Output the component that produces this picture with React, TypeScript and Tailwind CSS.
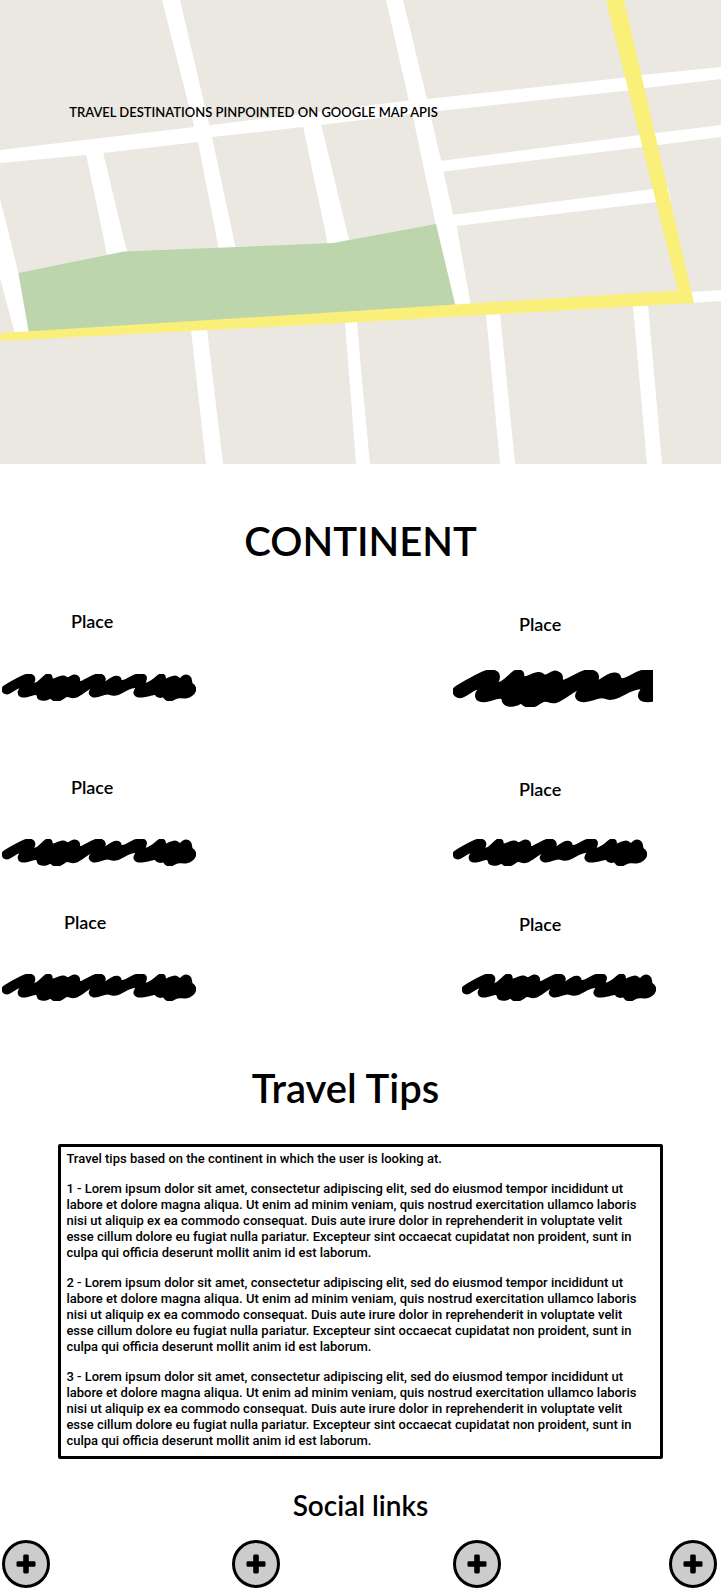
const LOREM =
  "Lorem ipsum dolor sit amet, consectetur adipiscing elit, sed do eiusmod tempor incididunt ut labore et dolore magna aliqua. Ut enim ad minim veniam, quis nostrud exercitation ullamco laboris nisi ut aliquip ex ea commodo consequat. Duis aute irure dolor in reprehenderit in voluptate velit esse cillum dolore eu fugiat nulla pariatur. Excepteur sint occaecat cupidatat non proident, sunt in culpa qui officia deserunt mollit anim id est laborum.";

function StreetMap() {
  return (
    <svg viewBox="0 0 721 464" className="block h-auto w-full" role="img" aria-label="Street map">
      <rect width="721" height="464" fill="#ebe8e1" />
      <g fill="#fff">
        <polygon points="162,0 180,0 209,124 212,137 236,250 219,250 198,142 194,126" />
        <polygon points="0,150 194,127 409,100.6 427,99 625,77.5 642,75 721,67 721,79 645,88 628,90.5 430,112 361,120 321,125 303,127 212,137 198,142 103,153 86,155 0,163" />
        <polygon points="86,154 103,152 124,240 128,254 107,256 104,240" />
        <polygon points="303,126 321,124 350,244 328,248 327,240" />
        <polygon points="386,0 403,0 427,99 431,117 441,160 453,215 457,226 459,240 471,306 455,306 439,240 413,117 409,101" />
        <polygon points="440,161 640,135 656,133 721,125 721,137 658,145 642,147 440,172" />
        <polygon points="452,215 653,189 668,187 671,201 657,202 456,226" />
        <polygon points="690,292 721,290 721,301 690,303" />
        <polygon points="0,199 8,230 18,272 29,333 15,334 0,278" />
        <polygon points="191,330 207,329 223,464 206,464" />
        <polygon points="345,322 357,321 361,370 370,464 356,464" />
        <polygon points="486,314 500,313 515,464 500,464" />
        <polygon points="633,306 648,305 662,464 647,464" />
      </g>
      <polygon fill="#bcd5ac" points="18.500,273 124,251.500 333,243 436,224 455.500,306 29,333" />
      <polygon fill="#faef78" points="606,0 624,0 694,303 361,322 0,341 1,333 361,310.500 678,290.500" />
    </svg>
  );
}

const OUTLINE: [number, number][] = [
  [0, 44], [4, 37], [64, 3], [82, -1], [96, 5], [98, 19], [91, 31], [106, 26], [128, 4], [138, -2],
  [150, 4], [149, 19], [174, 7], [188, 5], [197, 14], [211, 4], [221, 2], [233, 10], [232, 25],
  [245, 20], [277, 2], [294, -1], [308, 5], [311, 18], [303, 30], [323, 16], [340, 6], [356, 8],
  [359, 25], [397, 3], [415, -1], [430, 1], [436, 12], [428, 31], [450, 22], [470, 4], [480, -2],
  [492, 4], [491, 18], [510, 8], [526, 5], [537, 16], [545, 5], [557, 2], [570, 9], [571, 29],
  [580, 34], [584, 46], [580, 58], [565, 70], [550, 72], [530, 70], [515, 79], [505, 82], [492, 77],
  [487, 67], [478, 71], [465, 67], [462, 59], [440, 66], [415, 70], [401, 66], [397, 54], [407, 39],
  [387, 41], [351, 61], [333, 65], [319, 58], [298, 65], [280, 70], [266, 66], [262, 54], [273, 39],
  [262, 44], [230, 67], [213, 73], [195, 65], [177, 79], [164, 82], [152, 79], [145, 71], [138, 77],
  [120, 80], [107, 74], [105, 58], [78, 67], [62, 70], [50, 65], [48, 52], [58, 38], [44, 43],
  [25, 56], [14, 61], [2, 56],
];

// Rounds the outline by running a quadratic curve through the middle of every side.
function smooth(points: [number, number][]) {
  const mid = (i: number) => {
    const [ax, ay] = points[i % points.length];
    const [bx, by] = points[(i + 1) % points.length];
    return `${(ax + bx) / 2} ${(ay + by) / 2}`;
  };
  return `M${mid(points.length - 1)}${points.map(([x, y], i) => `Q${x} ${y} ${mid(i)}`).join("")}Z`;
}

const SCRIBBLE = smooth(OUTLINE);

function Scribble({ className }: { className: string }) {
  return (
    <svg viewBox="-1 -1 586 83" preserveAspectRatio="none" className={className} aria-hidden="true">
      <path d={SCRIBBLE} stroke="#000" strokeWidth="5" strokeLinejoin="round" />
    </svg>
  );
}

type PlaceProps = { label?: string; text: string; art?: string; wide?: boolean };

function Place({ label = "", text, art = "", wide = false }: PlaceProps) {
  return (
    <article className={label}>
      <h2 className={`text-lg leading-6 ${text}`}>Place</h2>
      <div className={`overflow-hidden ${art}`}>
        <Scribble className={wide ? "block h-[37px] w-[273px]" : "block h-[27px] w-[194px]"} />
      </div>
    </article>
  );
}

export default function App() {
  return (
    <main className="min-h-screen bg-white font-['Lato',sans-serif] font-semibold text-black">
      <section className="relative">
        <StreetMap />
        <p className="absolute top-[22%] left-[9.6%] text-[13px] leading-5">
          TRAVEL DESTINATIONS PINPOINTED ON GOOGLE MAP APIS
        </p>
      </section>

      <h1 className="mt-[53px] text-center text-[40px] leading-12">CONTINENT</h1>

      <section className="mt-11 grid grid-cols-[453fr_268fr]">
        <Place text="pl-[71px]" art="ml-0.5 mt-[41px]" />
        <Place label="pt-[3px]" text="pl-[66px]" art="mt-[34px] w-[200px]" wide />
        <Place label="pt-17" text="pl-[71px]" art="ml-0.5 mt-10" />
        <Place label="pt-[70px]" text="pl-[66px]" art="mt-[38px]" />
        <Place label="pt-11" text="pl-16" art="ml-0.5 mt-10" />
        <Place label="pt-[46px]" text="pl-[66px]" art="ml-[9px] mt-[38px]" />
      </section>

      <section className="mt-[63px] px-[8.1%]">
        <h1 className="pr-[30px] text-center text-[40px] leading-12">Travel Tips</h1>
        <div className="mt-8 rounded-xs border-3 border-black pt-1 pr-4 pb-[7px] pl-[5px] font-['Roboto',sans-serif] text-[13px] leading-4 font-medium">
          <p>Travel tips based on the continent in which the user is looking at.</p>
          {[1, 2, 3].map((n) => (
            <p key={n} className="mt-3.5">{`${n} - ${LOREM}`}</p>
          ))}
        </div>
      </section>

      <footer className="mt-7">
        <h2 className="text-center text-[28px] leading-9">Social links</h2>
        <nav
          aria-label="Social links"
          className="mt-[17px] grid grid-cols-[230fr_221fr_216fr_48px] pr-1 pl-0.5"
        >
          {[1, 2, 3, 4].map((n) => (
            <button
              key={n}
              type="button"
              aria-label={`Social link ${n}`}
              className="flex size-12 items-center justify-center rounded-full border-3 border-black bg-[#ccc]"
            >
              <svg viewBox="0 0 20 20" className="size-5" aria-hidden="true">
                <rect x="7.200" y="0.500" width="5.600" height="19" rx="1.400" />
                <rect x="0.500" y="7.200" width="19" height="5.600" rx="1.400" />
              </svg>
            </button>
          ))}
        </nav>
      </footer>
    </main>
  );
}
